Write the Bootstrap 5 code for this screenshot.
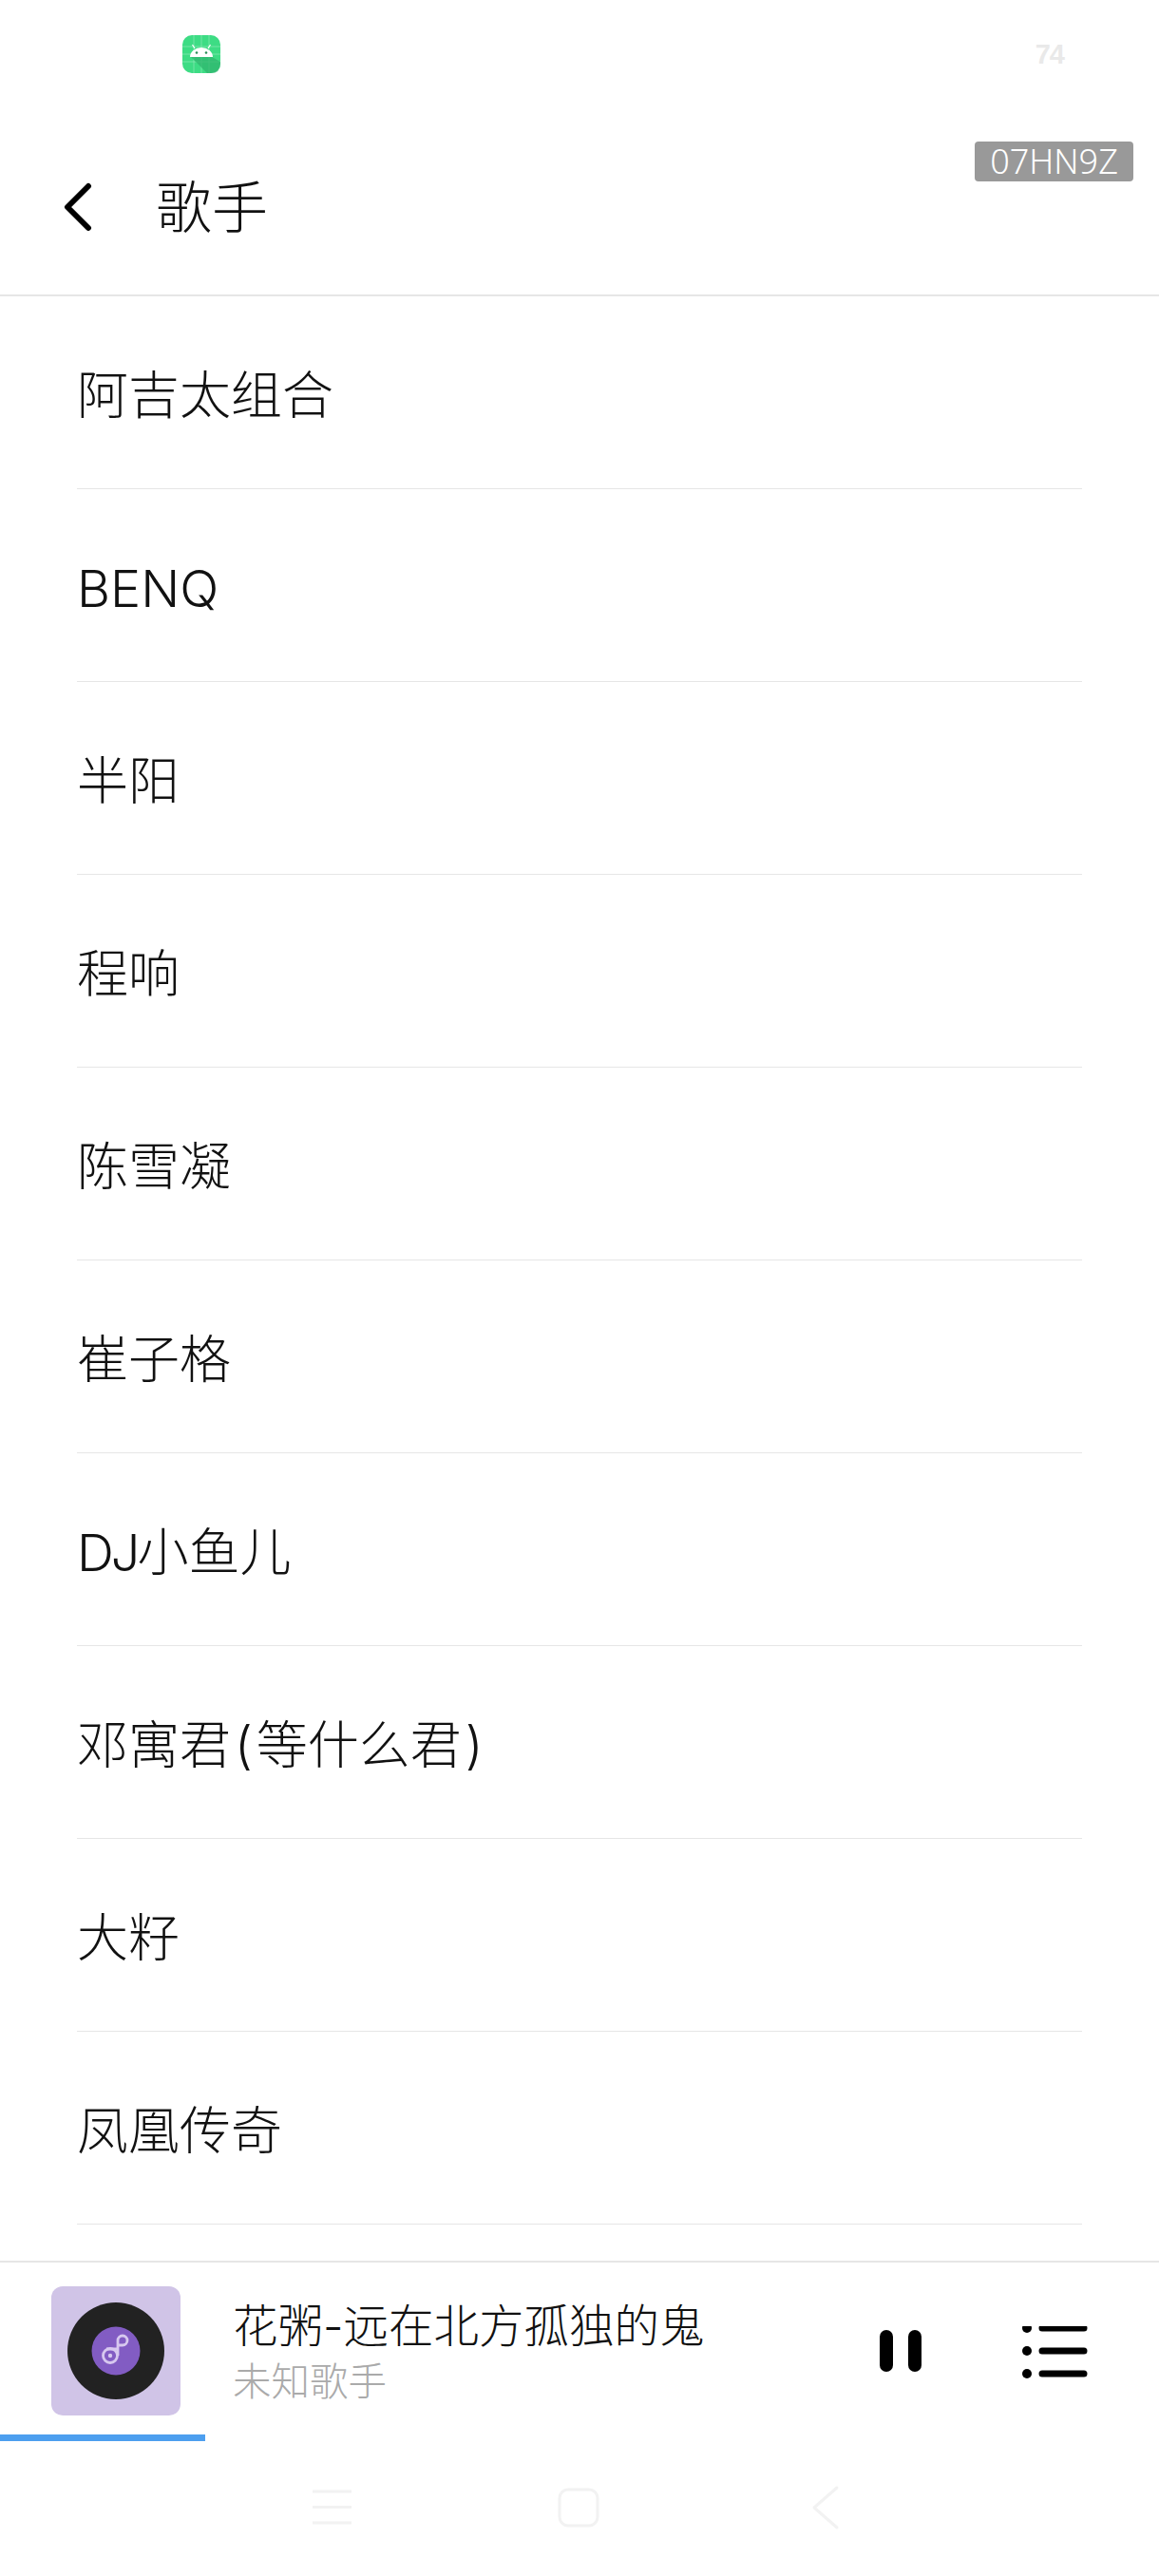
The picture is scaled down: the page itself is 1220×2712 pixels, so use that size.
<!DOCTYPE html>
<html lang="zh">
<head>
<meta charset="utf-8">
<title>歌手</title>
<link href="https://cdn.jsdelivr.net/npm/bootstrap@5.3.0/dist/css/bootstrap.min.css" rel="stylesheet">
<style>
html,body{margin:0;height:2712px;background:#fff;overflow:hidden}
body{font-family:Inter,"Noto Sans CJK SC","Noto Sans",sans-serif;font-weight:260;color:#111}
.phone{width:1220px;height:2712px;position:relative}
.stat-bar{height:149px;padding:37px 100px 0 192px}
.stat-num{font-family:"Liberation Sans",sans-serif;font-weight:700;font-size:29px;line-height:40px;color:#e9e9e9;letter-spacing:-1px}
.stamp{position:absolute;top:149px;right:27px;width:167px;height:42px;background:#999;color:#fff;border-radius:4px;font-size:36px;line-height:42px;text-align:center;font-family:"Noto Sans",sans-serif;font-weight:300}
.top-head{height:163px;border-bottom:2px solid #e6e6e6;padding:0 0 23px 66px}
.top-title{font-size:59px;line-height:70px;margin-left:66px;margin-top:2px;color:#111}
.singers{--bs-list-group-bg:transparent;--bs-list-group-color:#111;--bs-list-group-border-width:0;border-radius:0}
.singers .list-group-item{height:203px;margin:0 81px;padding:7px 0 0 0;border-bottom:1px solid #e6e6e6;font-size:54px;line-height:60px;display:flex;align-items:center;border-radius:0;white-space:pre}
.par{margin:0 4px}
.tight{letter-spacing:-3px}
.mini{margin-top:38px;height:183px;border-top:2px solid #e6e6e6;padding:25px 75px 20px 54px}
.art{width:136px;height:136px;border-radius:12px;background:#d0c4e7}
.meta{margin-left:55px}
.song{font-size:47.500px;line-height:60px;color:#111;height:60px;margin-top:12px}
.who{font-size:40.500px;line-height:58px;color:#aaa;height:58px}
.bar{--bs-progress-height:7px;--bs-progress-bg:transparent;--bs-progress-border-radius:0;--bs-progress-bar-bg:#4d9fef}
.softkeys{padding-top:45px;padding-left:324px;gap:210px}
.ctrls{margin-top:42px}
.keyback{margin-left:7px}
</style>
</head>
<body>
<div class="phone">
  <div class="stat-bar d-flex justify-content-between align-items-start">
    <svg width="40" height="40" viewBox="0 0 40 40" aria-hidden="true">
      <rect width="40" height="40" rx="10" fill="#3ddc84"/>
      <path d="M12 0v40M20 0v40M28 0v40M0 12h40M0 20h40M0 28h40" stroke="#8eeab5" stroke-width=".7"/>
      <path d="M9 23L26 40H30Q40 40 40 30V28L31 23Z" fill="#2fb56d" opacity=".75"/>
      <path d="M8 23a12 10 0 0 1 24 0z" fill="#fff"/>
      <path d="M13 14l-2.500-4M27 14l2.500-4" stroke="#fff" stroke-width="1.200"/>
      <circle cx="15" cy="18.500" r="1.300" fill="#2b8f58"/><circle cx="25" cy="18.500" r="1.300" fill="#2b8f58"/>
    </svg>
    <span class="stat-num">74</span>
  </div>
  <div class="stamp">07HN9Z</div>
  <nav class="navbar top-head flex-nowrap justify-content-start">
    <svg width="32" height="52" viewBox="0 0 32 52" aria-hidden="true"><path d="M27 4L5 26l22 22" fill="none" stroke="#000" stroke-width="6" stroke-linecap="round" stroke-linejoin="round"/></svg>
    <span class="top-title">歌手</span>
  </nav>
  <div class="list-group singers">
    <div class="list-group-item">阿吉太组合</div>
    <div class="list-group-item">BENQ</div>
    <div class="list-group-item">半阳</div>
    <div class="list-group-item">程响</div>
    <div class="list-group-item">陈雪凝</div>
    <div class="list-group-item">崔子格</div>
    <div class="list-group-item"><span><span class="tight">DJ</span>小鱼儿</span></div>
    <div class="list-group-item"><span>邓寓君<span class="par">(</span>等什么君<span class="par">)</span></span></div>
    <div class="list-group-item">大籽</div>
    <div class="list-group-item">凤凰传奇</div>
  </div>
  <div class="mini d-flex align-items-start">
    <div class="art d-flex align-items-center justify-content-center flex-shrink-0">
      <svg width="102" height="102" viewBox="0 0 102 102" aria-hidden="true">
        <circle cx="51" cy="51" r="51" fill="#222"/>
        <circle cx="51" cy="51" r="25.500" fill="#825cc3"/>
        <path d="M53 56V40a5 5 0 1 1 5 5H53M53 49H41" fill="none" stroke="#d7c8ef" stroke-width="2.800"/>
        <circle cx="45" cy="56" r="7.500" fill="none" stroke="#d7c8ef" stroke-width="2.800"/>
        <circle cx="45" cy="56" r="2.200" fill="#d7c8ef"/>
      </svg>
    </div>
    <div class="meta flex-grow-1">
      <div class="song">花粥-远在北方孤独的鬼</div>
      <div class="who">未知歌手</div>
    </div>
    <svg class="flex-shrink-0 ctrls" width="220" height="60" viewBox="0 0 220 60" aria-hidden="true">
      <rect x="1" y="4" width="14" height="44" rx="7" fill="#000"/>
      <rect x="31" y="4" width="14" height="44" rx="7" fill="#000"/>
      <circle cx="156" cy="2" r="5" fill="#000"/>
      <circle cx="156" cy="26" r="5" fill="#000"/>
      <circle cx="156" cy="50" r="5" fill="#000"/>
      <path d="M172 2h44M172 26h44M172 50h44" stroke="#000" stroke-width="7" stroke-linecap="round"/>
    </svg>
  </div>
  <div class="progress bar"><div class="progress-bar" style="width:216px"></div></div>
  <div class="softkeys d-flex align-items-center">
    <svg width="50" height="44" viewBox="0 0 50 44" aria-hidden="true"><path d="M5 5h41M5 21.500h41M5 38h41" stroke="#f2f2f2" stroke-width="3"/></svg>
    <svg width="50" height="46" viewBox="0 0 50 46" aria-hidden="true"><rect x="5" y="4" width="40" height="38" rx="9" fill="none" stroke="#f2f2f2" stroke-width="3"/></svg>
    <svg class="keyback" width="36" height="50" viewBox="0 0 36 50" aria-hidden="true"><path d="M30 4L6 25l24 21" fill="none" stroke="#f2f2f2" stroke-width="3" stroke-linecap="round" stroke-linejoin="round"/></svg>
  </div>
</div>
</body>
</html>
